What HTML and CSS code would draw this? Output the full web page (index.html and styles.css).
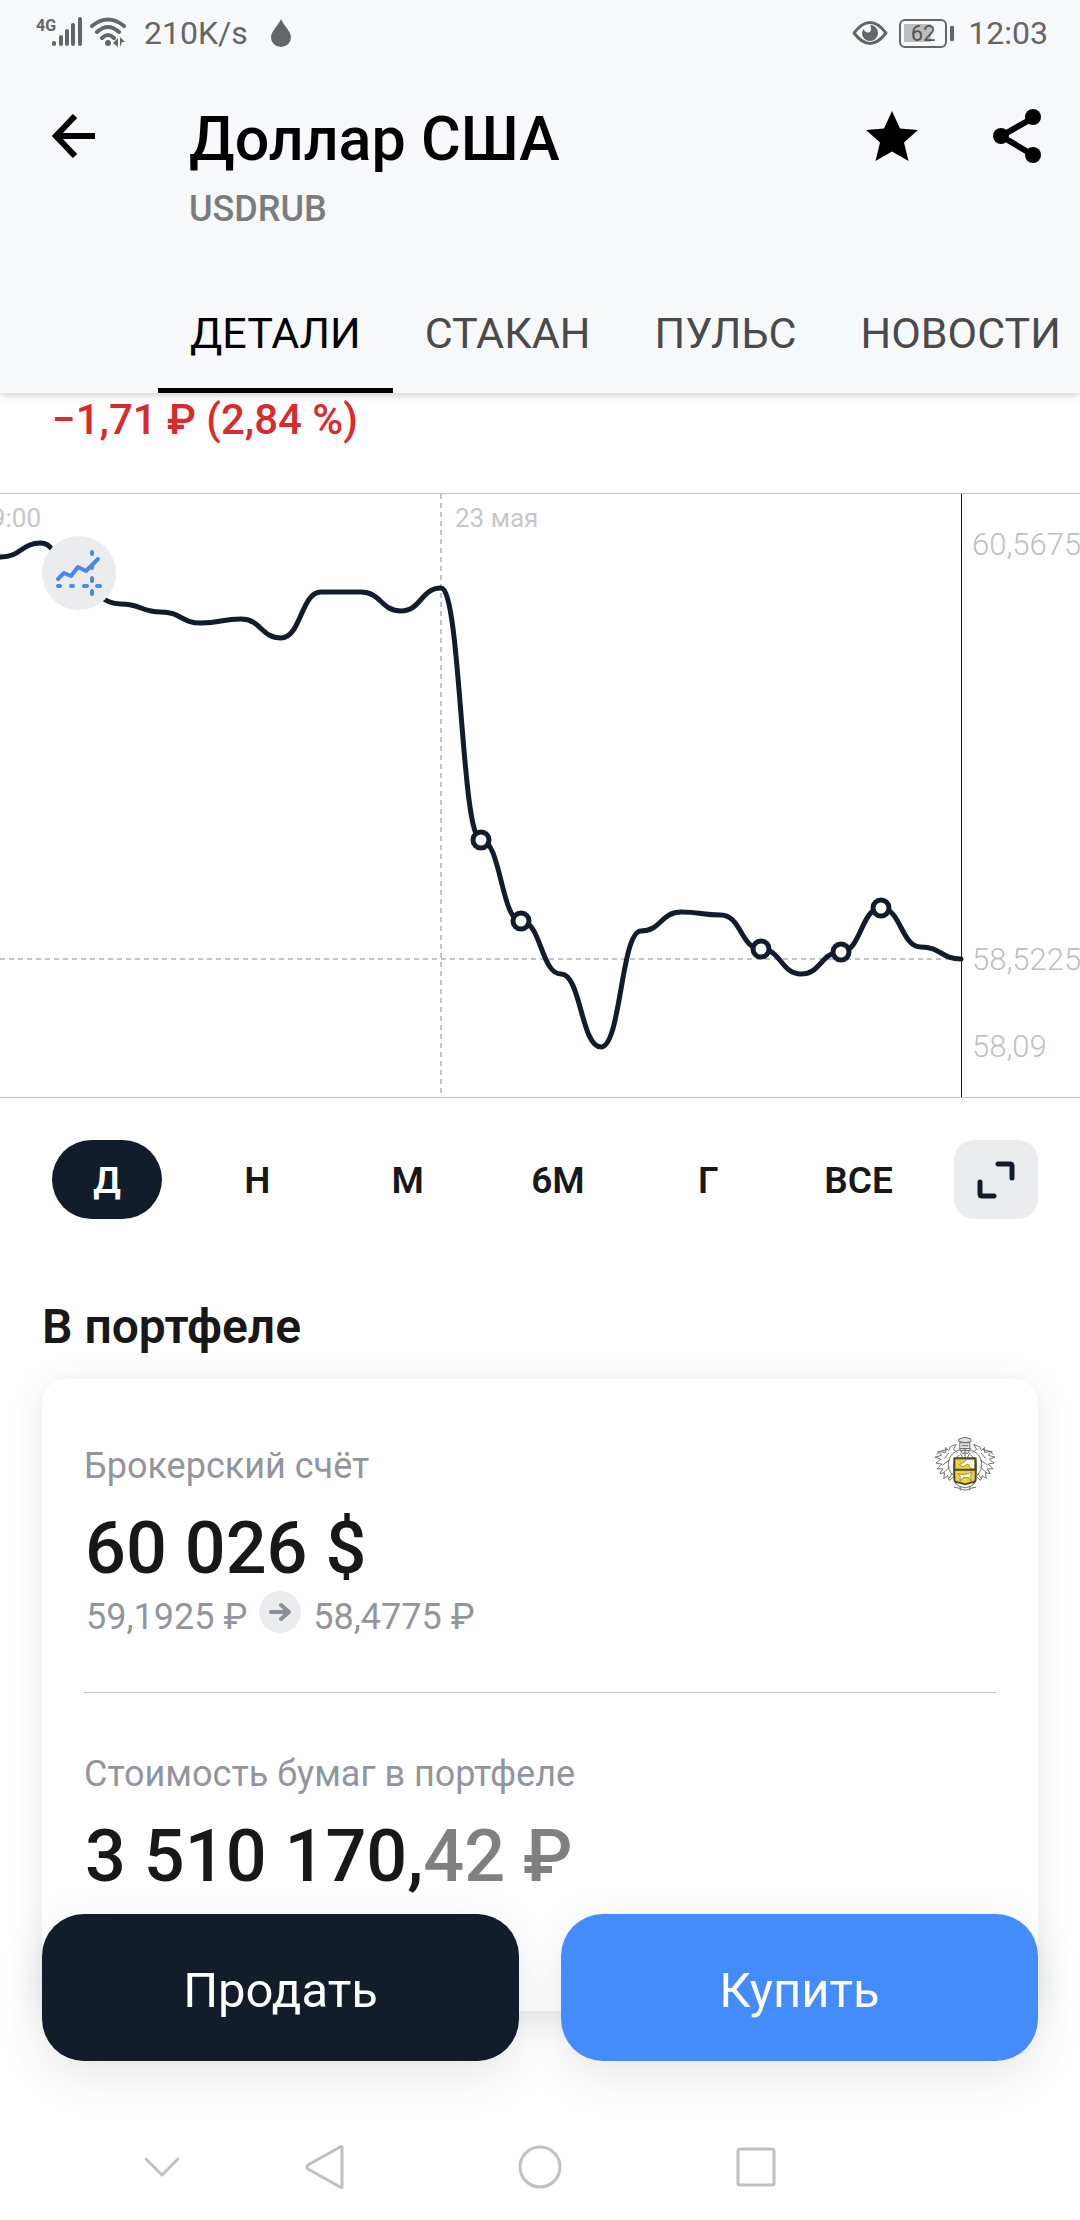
FILE: index.html
```html
<!DOCTYPE html>
<html lang="ru">

<head>
    <meta charset="UTF-8">
    <meta name="viewport" content="width=device-width, initial-scale=1.0">
    <title>Доллар США</title>
    <link rel="stylesheet" href="styles.css">
</head>

<body>
    <header class="header">
        <div class="status">
            <svg class="signal" width="48" height="32" viewBox="0 0 48 32">
                <text x="0" y="14" class="net">4G</text>
                <path d="M18 26v1M25 20v7M31 14v13M37 8v19M44 2v25" />
            </svg>
            <svg class="wifi" width="36" height="32" viewBox="0 0 36 32">
                <path d="M2 9Q18-4 34 9M7 15Q18 5 29 15M12 21Q18 15 24 21" />
                <circle cx="18" cy="26" r="3" />
                <path class="fill" d="M23 26l5-5v9zM30 20l5 5h-3l-2 5z" />
            </svg>
            <span class="speed">210K/s</span>
            <svg class="drop" width="22" height="30" viewBox="0 0 22 30">
                <path d="M11 1C14 8 21 13 21 19.500a10 9.500 0 0 1-20 0C1 13 8 8 11 1z" />
            </svg>
            <span class="grow"></span>
            <svg class="eye" width="36" height="26" viewBox="0 0 36 26">
                <path d="M2 13Q18-8 34 13Q18 34 2 13z" />
                <path class="fill" d="M18 5a8 8 0 1 1-8 8c0-2 1-3 2-4c0 4 6 5 7 1c0-2 0-3-1-5z" />
            </svg>
            <svg class="battery" width="58" height="32" viewBox="0 0 58 32">
                <rect class="level" x="6" y="7" width="27" height="18" />
                <rect class="case" x="2" y="3" width="46" height="27" rx="5" />
                <rect class="tip" x="52" y="9" width="4" height="15" rx="1" />
                <text x="25" y="24">62</text>
            </svg>
            <span class="time">12:03</span>
        </div>

        <div class="top">
            <button class="icon back" aria-label="Назад">
                <svg width="44" height="44" viewBox="0 0 44 44">
                    <path d="M23 2L4 22l19 20M4 22h39" />
                </svg>
            </button>
            <div class="name">
                <h1>Доллар США</h1>
                <p>USDRUB</p>
            </div>
            <button class="icon star" aria-label="Избранное">
                <svg width="52" height="52" viewBox="0 0 52 52">
                    <path d="M26 1l8 17.500 18 1.500-14 12.500L42.500 51 26 41.500 9.500 51 14 32.500 0 20l18-1.500z" />
                </svg>
            </button>
            <button class="icon share" aria-label="Поделиться">
                <svg width="50" height="54" viewBox="0 0 50 54">
                    <path d="M41 9L9 27l32 19" />
                    <circle cx="41" cy="8" r="8" />
                    <circle cx="9" cy="27" r="8" />
                    <circle cx="41" cy="46" r="8" />
                </svg>
            </button>
        </div>

        <nav class="tabs">
            <a href="#details" class="active">ДЕТАЛИ</a>
            <a href="#book">СТАКАН</a>
            <a href="#pulse">ПУЛЬС</a>
            <a href="#news">НОВОСТИ</a>
        </nav>
    </header>

    <main id="details">
        <p class="change">−1,71 ₽ (2,84 %)</p>

        <div class="chart">
            <svg viewBox="0 0 1080 603">
                <path class="grid" d="M441 0V603M0 465H961" />
                <path class="axis" d="M961.500 0V603" />
                <text class="date end" x="41" y="33">19:00</text>
                <text class="date" x="455" y="33">23 мая</text>
                <text class="price" x="972" y="61">60,5675</text>
                <text class="price" x="972" y="476">58,5225</text>
                <text class="price" x="972" y="563">58,09</text>
                <path class="line" d="M-39 70C-19 70-19 63 1 63S21 49 41 49S61 96 81 96S101 110 121 110S141 118 161 118S181 129 201 129S221 125 241 125S261 144 281 144S301 98 321 98H361C381 98 381 117 401 117S421 94 441 94S461 346 481 346S501 427 521 427S541 480 561 480S581 553 601 553S621 437 641 437S661 418 681 418S701 421 721 421S741 455 761 455S781 480 801 480S821 458 841 458S861 414 881 414S901 453 921 453S941 465 961 465" />
                <g class="dots">
                    <circle cx="481" cy="346" r="8" />
                    <circle cx="521" cy="427" r="8" />
                    <circle cx="761" cy="455" r="8" />
                    <circle cx="841" cy="458" r="8" />
                    <circle cx="881" cy="414" r="8" />
                </g>
            </svg>
            <button class="mode" aria-label="Тип графика">
                <svg width="74" height="74" viewBox="0 0 74 74">
                    <path d="M16 43l6-6 7 3 7-9 8 4 12-12" />
                    <path d="M16 50h2M29 50h2M42 50h3M55 50h3M50 16v2M50 30v2M50 42v3M50 55v3" />
                </svg>
            </button>
        </div>

        <div class="range">
            <button class="active">Д</button>
            <button>Н</button>
            <button>М</button>
            <button>6М</button>
            <button>Г</button>
            <button>ВСЕ</button>
            <button class="full" aria-label="На весь экран">
                <svg width="40" height="40" viewBox="0 0 40 40">
                    <path d="M22 4h12q2 0 2 2v12M4 22v12q0 2 2 2h12" />
                </svg>
            </button>
        </div>

        <h2>В портфеле</h2>
        <section class="card">
            <div class="account">
                <div>
                    <p class="label">Брокерский счёт</p>
                    <p class="sum">60 026 $</p>
                </div>
                <svg class="crest" width="62" height="56" viewBox="0 0 64 56">
                    <path class="leaf" d="M26 14C20 15 16 20 15 26C14 32 16 36 20 40M26 19C22 21 20 26 20 31c0 5 1 8 2 10M24 16l-4-3 3-5-6 2-2 4-3-3v5l-8-1 4 4-7 2 6 2-5 4 6 1-5 5 6 0-3 5 5-1-1 6 4-3 2 5 4-4M14 13l-8 2-3 3M11 22l4-5M9 29l7-5M10 37l6-6M15 43l4-5" />
                    <path class="leaf" d="M38 14C44 15 48 20 49 26C50 32 48 36 44 40M38 19C42 21 44 26 44 31c0 5-1 8-2 10M40 16l4-3-3-5 6 2 2 4 3-3v5l8-1-4 4 7 2-6 2 5 4-6 1 5 5-6 0 3 5-5-1 1 6-4-3-2 5-4-4M50 13l8 2 3 3M53 22l-4-5M55 29l-7-5M54 37l-6-6M49 43l-4-5" />
                    <path class="helm" d="M26 2q6-3 12 0v3q-6 2-12 0zM27 6h10v6H27zM26 12l3 5h6l3-5M29 9h6M27 17l3 5M37 17l-3 5M32 13v8M28 14h8" />
                    <path class="gold" d="M21 22h22v22q0 3-4 3l-7 2-7-2q-4 0-4-3z" />
                    <path class="white" d="M34 23h8v10h-4l-3-5-5 3-4-2 5-3z" />
                    <path class="white" d="M25 38l4 1 6-1 4-2-1 4v6l-2-4h-6l-3 4v-5z" />
                    <path class="shield" d="M21 22h22v22q0 3-4 3l-7 2-7-2q-4 0-4-3zM21 34h22" />
                    <path class="leaf" d="M22 48l4 3q6 3 12 0l4-3M21 52l5 1q6 4 12 0l5-1M27 51v4M37 51v4" />
                </svg>
            </div>
            <p class="rate">
                <span>59,1925 ₽</span>
                <svg width="42" height="42" viewBox="0 0 42 42">
                    <circle cx="21" cy="21" r="21" />
                    <path d="M12 21h17M22 14l8 7-8 7" />
                </svg>
                <span>58,4775 ₽</span>
            </p>
            <hr>
            <p class="label">Стоимость бумаг в портфеле</p>
            <p class="sum">3 510 170,<span>42 ₽</span></p>
        </section>
    </main>

    <footer class="footer">
        <div class="actions">
            <button class="sell">Продать</button>
            <button class="buy">Купить</button>
        </div>
        <div class="system">
            <button aria-label="Скрыть">
                <svg width="36" height="48" viewBox="0 0 36 48"><path d="M2 16l16 16 16-16" /></svg>
            </button>
            <button aria-label="Назад">
                <svg width="48" height="48" viewBox="0 0 48 48"><path d="M42 4v40q0 1-2 0L8 26q-2-2 0-4L40 4q2-1 2 0z" /></svg>
            </button>
            <button aria-label="Домой">
                <svg width="48" height="48" viewBox="0 0 48 48"><circle cx="24" cy="24" r="20" /></svg>
            </button>
            <button aria-label="Недавние">
                <svg width="48" height="48" viewBox="0 0 48 48"><rect x="6" y="6" width="36" height="36" rx="2" /></svg>
            </button>
        </div>
    </footer>
</body>

</html>
```

FILE: styles.css
```css
* {
    box-sizing: border-box;
    margin: 0;
    padding: 0;
}

body {
    min-height: 100vh;
    background-color: #fff;
    color: #181818;
    font-family: Roboto, "Liberation Sans", sans-serif;
    overflow-x: hidden;
}

button {
    border: none;
    background: none;
    font: inherit;
    color: inherit;
    cursor: pointer;
}

svg {
    display: block;
    fill: none;
    stroke-linecap: round;
    stroke-linejoin: round;
}

/* header */
.header {
    position: relative;
    background-color: #f7f8fa;
    box-shadow: 0 2px 8px rgba(0, 0, 0, .2);
}

.status {
    display: flex;
    align-items: center;
    height: 66px;
    padding: 0 32px 0 36px;
    color: #646567;
    font-size: 32px;
}

.status svg {
    stroke: #646567;
    stroke-width: 4;
}

.status text {
    fill: #555;
    stroke: none;
    font-size: 22px;
    text-anchor: middle;
}

.status .net {
    fill: #646567;
    font-size: 16px;
    font-weight: 700;
    text-anchor: start;
}

.status .wifi {
    margin-left: 6px;
}

.status circle,
.status .fill,
.status .tip,
.status .drop {
    fill: #646567;
    stroke: none;
}

.status .drop {
    margin-left: 22px;
}

.status .drop path {
    stroke: none;
}

.status .level {
    fill: #bcbdbe;
    stroke: none;
}

.status .case {
    stroke-width: 2;
}

.speed {
    margin-left: 18px;
}

.grow {
    flex: 1;
}

.battery {
    margin: 0 12px 0 10px;
}

.status .eye {
    stroke-width: 3;
}

.top {
    display: flex;
    align-items: flex-start;
    padding: 38px 38px 0 52px;
}

.name {
    flex: 1;
    padding-left: 93px;
}

.name h1 {
    color: #000;
    font-size: 61px;
    font-weight: 500;
    line-height: 70px;
}

.name p {
    margin-top: 14px;
    color: #7b7c7e;
    font-size: 36px;
    font-weight: 500;
    line-height: 42px;
}

.icon svg {
    stroke: #000;
    stroke-width: 6;
    stroke-linecap: butt;
    stroke-linejoin: miter;
}

.back {
    padding-top: 10px;
}

.star {
    padding-top: 6px;
}

.star svg {
    fill: #000;
    stroke: none;
}

.share {
    margin-left: 74px;
    padding-top: 5px;
}

.share circle {
    fill: #000;
    stroke: none;
}

.tabs {
    display: flex;
    margin-top: 50px;
    padding-left: 158px;
    overflow: hidden;
}

.tabs a {
    padding: 28px 32px 30px;
    border-bottom: 5px solid transparent;
    color: #4a4a4b;
    font-size: 43px;
    line-height: 50px;
    text-decoration: none;
}

.tabs .active {
    border-color: #000;
    color: #000;
}

/* chart */
.change {
    padding: 2px 52px 48px;
    color: #d92b2d;
    font-size: 42px;
    font-weight: 500;
    line-height: 50px;
}

.chart {
    position: relative;
    border-top: 1px solid #c0c1c2;
    border-bottom: 1px solid #c0c1c2;
}

.chart > svg {
    width: 100%;
}

.grid {
    stroke: #c4c4c4;
    stroke-width: 2;
    stroke-dasharray: 5 4;
    stroke-linecap: butt;
}

.axis {
    stroke: #131c2a;
    stroke-width: 1;
}

.line {
    stroke: #131c2a;
    stroke-width: 5;
}

.dots {
    fill: #fff;
    stroke: #131c2a;
    stroke-width: 5;
}

.date,
.price {
    fill: #c6c7c8;
    font-size: 26px;
}

.end {
    text-anchor: end;
}

.price {
    fill: #bebfc0;
    font-size: 31px;
    font-weight: 300;
}

.mode {
    position: absolute;
    top: 42px;
    left: 42px;
    border-radius: 50%;
    background-color: #ebecee;
}

.mode svg {
    stroke: #4a88e4;
    stroke-width: 4;
}

.range {
    display: flex;
    justify-content: space-between;
    padding: 42px 42px 0 52px;
}

.range button {
    width: 110px;
    height: 79px;
    padding-top: 2px;
    border-radius: 40px;
    font-size: 37px;
    font-weight: 600;
}

.range .active {
    background-color: #131c2a;
    color: #fff;
}

.range .full {
    display: flex;
    align-items: center;
    justify-content: center;
    width: 84px;
    padding: 0;
    border-radius: 20px;
    background-color: #ebecee;
}

.full svg {
    stroke: #131c2a;
    stroke-width: 5;
}

/* portfolio */
h2 {
    padding: 80px 42px 24px;
    font-size: 48px;
    font-weight: 600;
    line-height: 56px;
}

.card {
    margin: 0 42px;
    padding: 66px 42px 112px;
    border-radius: 24px;
    background-color: #fff;
    box-shadow: 0 6px 36px rgba(0, 0, 0, .1);
}

.account {
    display: flex;
    justify-content: space-between;
    align-items: flex-start;
}

.label {
    color: #92969c;
    font-size: 36px;
    line-height: 42px;
}

.sum {
    margin-top: 20px;
    padding-left: 1px;
    font-size: 72px;
    font-weight: 500;
    line-height: 84px;
}

.sum span {
    color: #808080;
}

.crest {
    margin-top: -9px;
    stroke-width: 1;
}

.leaf {
    stroke: #706c6a;
}

.helm {
    fill: #e4e3e3;
    stroke: #6e6a68;
}

.gold {
    fill: #ecd23c;
}

.white {
    fill: #fbf8ec;
    stroke: #a08f3c;
}

.shield {
    stroke: #4e4830;
    stroke-width: 2;
}

.rate {
    display: flex;
    align-items: flex-start;
    gap: 12px;
    padding-left: 2px;
    color: #92969c;
    font-size: 36px;
    line-height: 52px;
}

.rate svg {
    stroke: #8b9098;
    stroke-width: 4;
}

.rate circle {
    fill: #ebecee;
    stroke: none;
}

hr {
    margin: 49px 0 60px;
    border: none;
    border-top: 1px solid #c0c1c2;
}

/* bottom bar */
.footer {
    position: fixed;
    right: 0;
    bottom: 0;
    left: 0;
}

.actions {
    display: flex;
    gap: 42px;
    padding: 0 42px;
}

.actions button {
    flex: 1;
    height: 147px;
    padding-top: 6px;
    border-radius: 42px;
    color: #fff;
    font-size: 49px;
    box-shadow: 0 14px 48px rgba(0, 0, 0, .1);
}

.actions .sell {
    background-color: #131c2a;
}

.actions .buy {
    background-color: #448cfb;
}

.system {
    display: grid;
    grid-template-columns: 3fr 3fr 5fr 3fr;
    justify-items: center;
    padding: 82px 22.5% 29px 7.5%;
}

.system svg {
    stroke: #c0c0c0;
    stroke-width: 3;
}
```
